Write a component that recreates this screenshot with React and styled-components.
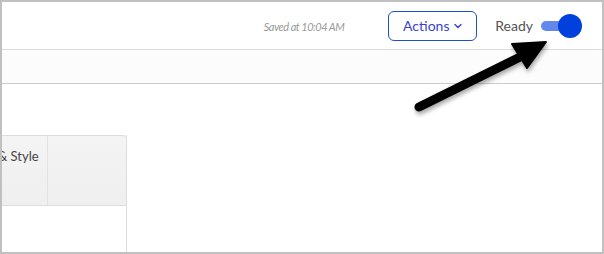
import React from 'react';
import styled, { createGlobalStyle } from 'styled-components';

const GlobalStyle = createGlobalStyle`
  html, body {
    margin: 0;
    padding: 0;
    background: #ffffff;
  }
  body {
    font-family: Lato, 'Open Sans', sans-serif;
  }
`;

const Frame = styled.div`
  position: relative;
  width: 604px;
  height: 254px;
  box-sizing: border-box;
  border: 2px solid #c0c0c0;
  background: #ffffff;
  overflow: hidden;
  display: flex;
  flex-direction: column;
`;

const TopBar = styled.div`
  height: 47px;
  border-bottom: 1px solid #dcdcdc;
  display: flex;
  align-items: center;
  justify-content: flex-end;
  padding-right: 20px;
  flex-shrink: 0;
`;

const SavedNote = styled.span`
  font-size: 11px;
  letter-spacing: -0.5px;
  font-style: italic;
  color: #9a9a9a;
  margin-right: 44px;
  margin-top: 1px;
`;

const ActionsButton = styled.button`
  height: 30px;
  width: 89px;
  box-sizing: border-box;
  border: 1px solid #1a4fd6;
  border-radius: 6px;
  background: #ffffff;
  color: #3a3fd4;
  font-family: Lato, 'Open Sans', sans-serif;
  font-size: 14px;
  display: flex;
  align-items: center;
  justify-content: center;
  gap: 5px;
  padding: 0;
  margin-right: 18px;
`;

const Chevron = styled.svg`
  width: 8px;
  height: 6px;
  margin-top: 1px;
`;

const ReadyLabel = styled.span`
  font-size: 14px;
  color: #555555;
  margin-right: 8px;
`;

const Toggle = styled.div`
  position: relative;
  width: 41px;
  height: 24px;
  display: flex;
  align-items: center;
`;

const Track = styled.div`
  width: 28px;
  height: 10px;
  border-radius: 5px;
  background: #6188ea;
`;

const Knob = styled.div`
  position: absolute;
  right: 0;
  top: 0;
  width: 24px;
  height: 24px;
  border-radius: 50%;
  background: #0040dc;
`;

const SubBar = styled.div`
  height: 33px;
  background: #fcfcfc;
  border-bottom: 1px solid #cccccc;
  flex-shrink: 0;
`;

const Content = styled.div`
  flex: 1;
  padding-top: 51px;
`;

const Table = styled.div`
  margin-left: -52px;
  width: 176px;
  height: 200px;
  border-right: 1px solid #dddddd;
  display: flex;
  flex-direction: column;
`;

const HeadRow = styled.div`
  height: 69px;
  display: flex;
  background: linear-gradient(#f4f4f4, #efefef);
  border-top: 1px solid #dddddd;
  border-bottom: 1px solid #dddddd;
  border-top-right-radius: 3px;
`;

const HeadCell = styled.div`
  width: ${(p) => p.width}px;
  box-sizing: border-box;
  border-right: ${(p) => (p.last ? 'none' : '1px solid #e2e2e2')};
  padding: 12px 0 0 ${(p) => p.pad || 8}px;
  font-size: 13px;
  color: #454545;
  white-space: nowrap;
`;

const Arrow = styled.svg`
  position: absolute;
  left: 0;
  top: 0;
  pointer-events: none;
`;

export default function App() {
  return (
    <>
      <GlobalStyle />
      <Frame>
        <TopBar>
          <SavedNote>Saved at 10:04 AM</SavedNote>
          <ActionsButton>
            Actions
            <Chevron viewBox="0 0 8 6">
              <path d="M1 1.5 L4 4.5 L7 1.5" fill="none" stroke="#3a3fd4" strokeWidth="1.4" strokeLinecap="round" />
            </Chevron>
          </ActionsButton>
          <ReadyLabel>Ready</ReadyLabel>
          <Toggle>
            <Track />
            <Knob />
          </Toggle>
        </TopBar>
        <SubBar />
        <Content>
          <Table>
            <HeadRow>
              <HeadCell width={98} pad={48}>&amp; Style</HeadCell>
              <HeadCell width={78} last />
            </HeadRow>
          </Table>
        </Content>
        <Arrow width="600" height="250" viewBox="2 2 600 250">
          <defs>
            <filter id="sh" x="-20%" y="-20%" width="140%" height="140%">
              <feGaussianBlur in="SourceAlpha" stdDeviation="2" />
              <feOffset dx="1" dy="3" result="b" />
              <feComponentTransfer>
                <feFuncA type="linear" slope="0.35" />
              </feComponentTransfer>
              <feMerge>
                <feMergeNode />
                <feMergeNode in="SourceGraphic" />
              </feMerge>
            </filter>
          </defs>
          <g filter="url(#sh)">
            <line x1="419" y1="107" x2="522" y2="56" stroke="#000" strokeWidth="9" strokeLinecap="round" />
            <polygon points="546,42 512,44 527,68" fill="#000" stroke="#000" strokeWidth="2" strokeLinejoin="round" />
          </g>
        </Arrow>
      </Frame>
    </>
  );
}
